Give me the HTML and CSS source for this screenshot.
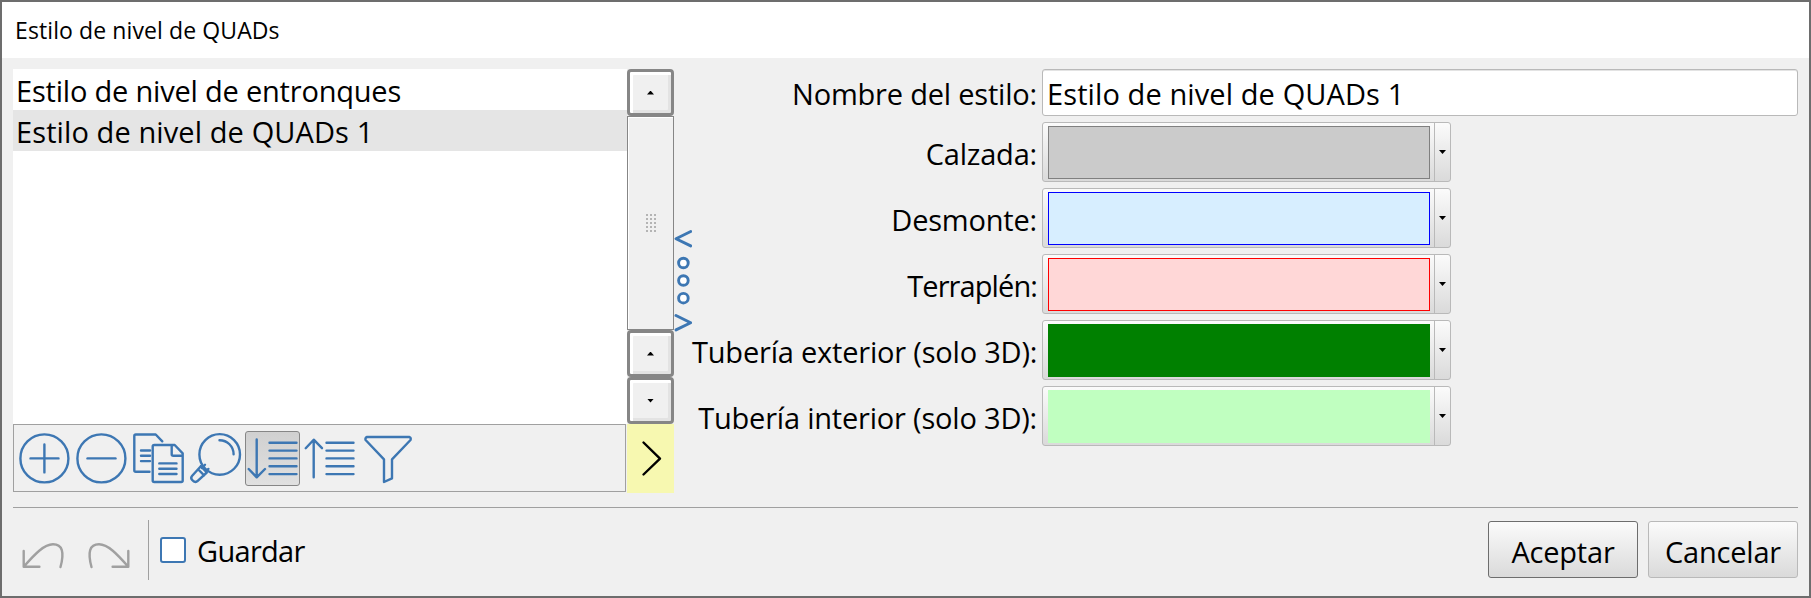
FILE: index.html
```html
<!DOCTYPE html>
<html lang="es">
<head>
    <meta charset="UTF-8">
    <title>Estilo de nivel de QUADs</title>
    <link rel="stylesheet" href="styles.css">
</head>
<body>
    <div class="window">
        <div class="titlebar">Estilo de nivel de QUADs</div>

        <div class="content">
            <div class="left">
                <div class="list-area">
                    <ul class="list">
                        <li>Estilo de nivel de entronques</li>
                        <li class="selected">Estilo de nivel de QUADs 1</li>
                    </ul>
                    <div class="toolbar">
                        <button class="tool" title="Añadir">
                            <svg viewBox="0 0 55 55"><circle cx="27.4" cy="27.4" r="24"/><path d="M13.5 27.4h28M27.4 13.4v28"/></svg>
                        </button>
                        <button class="tool" title="Eliminar">
                            <svg viewBox="0 0 55 55"><circle cx="27.4" cy="27.4" r="24"/><path d="M13.5 27.4h28"/></svg>
                        </button>
                        <button class="tool" title="Copiar">
                            <svg viewBox="0 0 55 55"><path d="M18.5 40.7H4.8q-1.5 0-1.5-1.5V5q0-1.5 1.5-1.5h19.9l6.6 6.8M10 19.5h9M10 24.7h9M10 30.1h9M23.2 14h20.5l8 8.3v27.2q0 1.5-1.5 1.5h-27q-1.5 0-1.500-1.500v-34q0-1.500 1.500-1.500zM40.700 15v8.200q0 1.500 1.500 1.500h8.500M28.300 32.400h17.200M28.300 37.700h17.200M28.300 43h17.200"/></svg>
                        </button>
                        <button class="tool" title="Buscar">
                            <svg viewBox="0 0 55 55"><circle cx="31.7" cy="23.4" r="20.3"/><path d="M31.5 9.2a14 14 0 0 1 14.100 14M12.800 35.200L4 45q-1.700 2 .2 4 2.400 3 5 1.300l9.600-8.800M12.800 35.200l6 6.300M10.300 38.500l5.800 5.900M14 37l3-3.200M17.700 40.500l2.700-2.600"/></svg>
                        </button>
                        <button class="tool active" title="Orden ascendente">
                            <svg viewBox="0 0 55 55"><path d="M11.700 8.500V46M3.700 38l8 8.300 8.300-8.300M24.500 11.700h27M24.500 19.600h27M24.500 27.400h27M24.500 35.300h27M24.500 43.100h27"/></svg>
                        </button>
                        <button class="tool" title="Orden descendente">
                            <svg viewBox="0 0 55 55"><path d="M11.700 46.300V9M3.700 17.200l8-8.500 8.300 8.500M24.500 11.700h27M24.500 19.600h27M24.500 27.400h27M24.500 35.300h27M24.500 43.100h27"/></svg>
                        </button>
                        <button class="tool" title="Filtrar">
                            <svg viewBox="0 0 55 55"><path d="M8 6h42.500q1.800.8 1 3L33 28.300v19L25 51V28.300L6.600 9q-.8-2.200 1.400-3z"/></svg>
                        </button>
                    </div>
                </div>
                <div class="side">
                    <button class="scroll-button"><span class="arrow up"></span></button>
                    <div class="slider">
                        <svg class="grip" width="10" height="18" viewBox="0 0 10 18"><path d="M1 0v18M5 0v18M9 0v18"/></svg>
                    </div>
                    <button class="scroll-button"><span class="arrow up"></span></button>
                    <button class="scroll-button"><span class="arrow down"></span></button>
                    <button class="expand">
                        <svg width="47" height="69" viewBox="0 0 47 69"><path d="M16.500 18.500L33 34.700 16.500 50.500"/></svg>
                    </button>
                </div>
            </div>

            <div class="splitter">
                <svg width="18" height="104" viewBox="0 0 18 104"><path d="M16.700 2.500L2 9.700l14.700 7.200M2 86.500l14.700 7.200L2 100.900"/><circle cx="9.400" cy="34" r="4.800"/><circle cx="9.400" cy="51.500" r="4.800"/><circle cx="9.400" cy="69.200" r="4.800"/></svg>
            </div>

            <form class="form">
                <label for="style_name">Nombre del estilo:</label>
                <input class="input" type="text" id="style_name" value="Estilo de nivel de QUADs 1">

                <label>Calzada:</label>
                <div class="combo"><span class="swatch road"></span><span class="drop"><span class="arrow down"></span></span></div>

                <label>Desmonte:</label>
                <div class="combo"><span class="swatch cut"></span><span class="drop"><span class="arrow down"></span></span></div>

                <label class="tight">Terraplén:</label>
                <div class="combo"><span class="swatch fill"></span><span class="drop"><span class="arrow down"></span></span></div>

                <label>Tubería exterior (solo 3D):</label>
                <div class="combo"><span class="swatch pipe-out"></span><span class="drop"><span class="arrow down"></span></span></div>

                <label>Tubería interior (solo 3D):</label>
                <div class="combo"><span class="swatch pipe-in"></span><span class="drop"><span class="arrow down"></span></span></div>
            </form>
        </div>

        <div class="footer">
            <svg class="history" width="46" height="32" viewBox="0 0 46 32"><path d="M2.700 12v15.700h15.700M2.700 27.700C14 15 23 5.300 32 5.300c9.500 0 11.500 8 7.500 22.700"/></svg>
            <svg class="history redo" width="46" height="32" viewBox="0 0 46 32"><path d="M43.300 12v15.700H27.600M43.300 27.700C32 15 23 5.300 14 5.300 4.500 5.300 2.500 13.300 6.500 28"/></svg>
            <span class="divider"></span>
            <label class="save"><input type="checkbox"><span>Guardar</span></label>
            <button class="button default">Aceptar</button>
            <button class="button">Cancelar</button>
        </div>
    </div>
</body>
</html>
```
FILE: styles.css
```css
* {
    box-sizing: border-box;
}

body, input, button {
    font-family: 'Segoe UI', 'Open Sans', 'Noto Sans', sans-serif;
    font-size: 29px;
    line-height: 41px;
    letter-spacing: -0.2px;
    color: #000;
}

body {
    margin: 0;
}

button {
    margin: 0;
    padding: 0;
    border: 0;
    background: none;
}

svg {
    display: block;
    fill: none;
    stroke: #3d77b3;
    stroke-width: 2.4;
    stroke-linecap: round;
    stroke-linejoin: round;
}

.window {
    display: flex;
    flex-direction: column;
    width: 1811px;
    height: 598px;
    border: 2px solid #6d6d6d;
    background-color: #f0f0f0;
    overflow: hidden;
}

.titlebar {
    height: 56px;
    padding-left: 13px;
    background-color: #fff;
    font-size: 23px;
    line-height: 57px;
    letter-spacing: 0.1px;
}

.content {
    display: flex;
    height: 424px;
    margin: 11px 11px 0;
}

.left {
    display: flex;
    width: 661px;
}

.list-area {
    width: 614px;
}

.list {
    height: 355px;
    margin: 0;
    padding: 0;
    background-color: #fff;
    list-style: none;
}

.list li {
    height: 41px;
    padding-left: 3px;
    line-height: 43px;
}

.list .selected {
    background-color: #e5e5e5;
    letter-spacing: 0.1px;
}

.toolbar {
    display: flex;
    gap: 2px;
    width: 613px;
    height: 68px;
    padding: 6px 3px;
    border: 1px solid #a0a0a0;
}

.tool {
    width: 55px;
    height: 55px;
}

.active {
    border: 1px solid #868686;
    border-radius: 3px;
    background: linear-gradient(#d0d0d0, #e0e0e0);
}

.active svg {
    margin: -1px;
    width: 55px;
}

.side {
    width: 47px;
}

.scroll-button {
    display: flex;
    align-items: center;
    justify-content: center;
    width: 47px;
    height: 47px;
    border: 3px solid #868686;
    border-radius: 4px;
    box-shadow: inset 3px 3px #fff, inset -3px -3px #e3e3e3;
    background-color: #f0f0f0;
}

.slider {
    display: flex;
    align-items: center;
    justify-content: center;
    height: 214px;
    border: 1px solid #868686;
    box-shadow: inset 1px 1px #fff;
}

.grip {
    stroke: #b4b4b4;
    stroke-width: 2;
    stroke-linecap: butt;
    stroke-dasharray: 2 2;
}

.expand {
    display: block;
    height: 69px;
    background-color: #f7f8b0;
}

.expand svg {
    stroke: #000;
}

.arrow {
    width: 7px;
    height: 4px;
    background-color: #000;
}

.up {
    clip-path: polygon(50% 0, 100% 100%, 0 100%);
}

.down {
    clip-path: polygon(0 0, 100% 0, 50% 100%);
}

.splitter {
    width: 18px;
    padding-top: 160px;
}

.splitter svg {
    stroke-width: 2.9;
}

.splitter circle {
    fill: #fff;
}

.form {
    display: grid;
    grid-template-columns: 345px 1fr;
    grid-template-rows: 47px repeat(5, 60px);
    column-gap: 5px;
    row-gap: 6px;
    flex: 1;
}

.form label {
    align-self: center;
    padding-top: 2px;
    text-align: right;
    white-space: nowrap;
}

.form .tight {
    letter-spacing: -0.9px;
}

.input {
    width: 756px;
    height: 47px;
    padding: 2px 4px 0;
    border: 1px solid #b9b9b9;
    border-radius: 3px;
    box-shadow: inset 0 1px #e3e3e3;
    background-color: #fff;
    letter-spacing: 0.1px;
    outline: none;
}

.combo {
    display: flex;
    width: 409px;
    height: 60px;
    border: 1px solid #b9b9b9;
    border-radius: 3px;
    background: linear-gradient(#fbfbfb, #dadada);
}

.swatch {
    width: 382px;
    height: 53px;
    margin: 3px 4px 0 5px;
    border: 1px solid;
}

.road {
    border-color: #808080;
    background-color: #cbcbcb;
}

.cut {
    border-color: #0000ff;
    background-color: #d7eeff;
}

.fill {
    border-color: #ff0000;
    background-color: #ffd7d7;
}

.pipe-out {
    border-color: #008000;
    background-color: #008000;
}

.pipe-in {
    border-color: #c0ffc0;
    background-color: #c0ffc0;
}

.drop {
    display: flex;
    flex: 1;
    align-items: center;
    justify-content: center;
    border-left: 1px solid #b9b9b9;
}

.footer {
    display: flex;
    height: 78px;
    margin: 14px 11px 0;
    padding-top: 13px;
    border-top: 1px solid #a0a0a0;
}

.history {
    margin: 18px 0 0 8px;
    stroke: #a0a0a0;
}

.redo {
    margin-left: 18px;
}

.divider {
    width: 1px;
    height: 60px;
    margin: -1px 11px 0 17px;
    background-color: #a0a0a0;
}

.save {
    display: flex;
    align-items: center;
    height: 57px;
    margin-right: auto;
}

.save input {
    appearance: none;
    width: 26px;
    height: 26px;
    margin: 0 11px 0 0;
    border: 2px solid #3d77b3;
    border-radius: 3px;
    background-color: #fff;
}

.save span {
    padding-top: 2px;
    letter-spacing: -0.7px;
}

.button {
    width: 150px;
    height: 57px;
    padding-top: 3px;
    border: 1px solid #b9b9b9;
    border-radius: 3px;
    background: linear-gradient(#fbfbfb, #dadada);
}

.default {
    margin-right: 10px;
    border-color: #6d6d6d;
}
```
